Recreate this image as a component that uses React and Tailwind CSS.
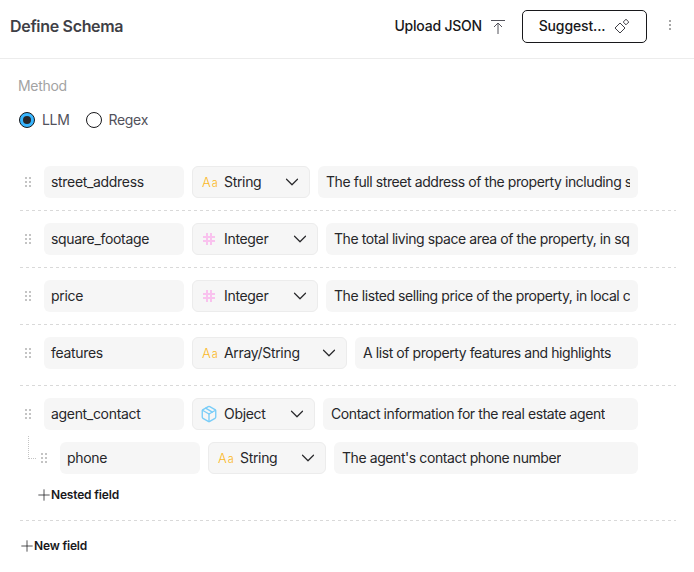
import React from "react";
import { ChevronDown, Plus, Package } from "lucide-react";

const Grip = () => (
  <svg width="6" height="10" viewBox="0 0 6 10" className="shrink-0 text-[#c4c4c4]" fill="currentColor">
    <rect x="0" y="0" width="2" height="2" /><rect x="4" y="0" width="2" height="2" />
    <rect x="0" y="4" width="2" height="2" /><rect x="4" y="4" width="2" height="2" />
    <rect x="0" y="8" width="2" height="2" /><rect x="4" y="8" width="2" height="2" />
  </svg>
);

const Divider = () => (
  <div className="h-px ml-[2px] bg-[repeating-linear-gradient(90deg,#d9d9d9_0_3px,transparent_3px_6px)]" />
);

const TypeIcon = ({ type }) => {
  if (type === "Integer")
    return (
      <svg width="16" height="16" viewBox="0 0 16 16" fill="none" stroke="#f9c2ee" strokeWidth="2" className="shrink-0">
        <path d="M6 2V14M10 2V14M2 6H14M2 10H14" />
      </svg>
    );
  if (type === "Object") return <Package size={18} strokeWidth={1.8} className="-m-px shrink-0 text-[#79cdf8]" />;
  return (
    <span className="w-4 shrink-0 pl-px flex items-baseline text-[#fbb81f] font-light leading-none tracking-normal">
      <span className="text-[13px]">A</span><span className="text-[11px] ml-px">a</span>
    </span>
  );
};

const widths = {
  String: "w-[118px]",
  Integer: "w-[126px]",
  "Array/String": "w-[155px]",
  Object: "w-[123px]",
};

const Row = ({ name, type, desc, nameW = "w-[140px]" }) => (
  <div className="flex items-center gap-2 flex-1 min-w-0">
    <div className={`${nameW} h-8 shrink-0 rounded-md bg-[#f6f6f6] px-[7px] pb-[2px] flex items-center text-[14px] text-[#27272a]`}>{name}</div>
    <div className={`${widths[type]} h-8 shrink-0 rounded-md bg-[#f6f6f6] border border-[#ececec] pl-2 pr-[6px] flex items-center text-[14px] text-[#27272a]`}>
      <TypeIcon type={type} />
      <span className="ml-[7px] pb-[2px]">{type}</span>
      <ChevronDown size={22} strokeWidth={1.3} className="ml-auto text-[#27272a]" />
    </div>
    <div className="h-8 flex-1 min-w-0 rounded-md bg-[#f6f6f6] px-2 pb-[2px] flex items-center text-[14px] tracking-[-0.03em] text-[#27272a]">
      <span className="block overflow-hidden whitespace-nowrap">{desc}</span>
    </div>
  </div>
);

const fields = [
  ["street_address", "String", "The full street address of the property including street"],
  ["square_footage", "Integer", "The total living space area of the property, in square feet"],
  ["price", "Integer", "The listed selling price of the property, in local currency"],
  ["features", "Array/String", "A list of property features and highlights"],
];

export default function App() {
  return (
    <div className="w-[694px] h-[572px] bg-white overflow-hidden font-['Inter',sans-serif] tracking-[-0.02em]">
      <header className="h-[59px] border-b border-[#ececec] pl-[10px] pr-[23px] pb-[5px] flex items-center">
        <h1 className="pb-[2px] text-[16px] font-semibold tracking-[-0.02em] text-[#3f3f46]">Define Schema</h1>
        <div className="ml-auto flex items-center">
          <button className="flex items-center text-[14px] font-medium tracking-[-0.015em] text-[#18181b]">
            <span className="pb-[2px]">Upload JSON</span>
            <svg width="14" height="14" viewBox="0 0 14 14" fill="none" stroke="#52525b" strokeWidth="1" className="ml-[9px]">
              <path d="M0 .5H14M7 3V14M3 7L7 3L11 7" />
            </svg>
          </button>
          <button className="ml-[17px] w-[125px] h-[33px] rounded-[5px] border border-[#18181b] flex items-center justify-center gap-[9px] text-[14px] font-medium tracking-[-0.01em] text-[#18181b]">
            <span className="pb-[2px]">Suggest...</span>
            <svg width="16" height="16" viewBox="0 0 16 16" fill="none" stroke="#3f3f46" strokeWidth="1">
              <path d="M6 4 L11 9 L6 14 L1 9 Z" />
              <path d="M12 .3 L14.8 3 L12 5.8 L9.2 3 Z" />
            </svg>
          </button>
          <svg width="2" height="10" viewBox="0 0 2 10" className="ml-[22px] mb-[3px] text-[#8a8a8a]" fill="currentColor">
            <rect x="0" y="0" width="2" height="2" rx="1" /><rect x="0" y="4" width="2" height="2" rx="1" /><rect x="0" y="8" width="2" height="2" rx="1" />
          </svg>
        </div>
      </header>

      <main className="px-[18px]">
        <div className="pt-[18px] text-[14px] leading-[18px] text-[#a3a3a3]">Method</div>
        <div className="mt-[15px] flex items-center text-[14px] leading-5 text-[#52525b]">
          <span className="w-4 h-4 ml-[1px] rounded-full border border-[#18181b] bg-[#38b6ff] flex items-center justify-center">
            <span className="w-2 h-2 rounded-full bg-[#27272a]" />
          </span>
          <span className="ml-[7px]">LLM</span>
          <span className="ml-4 w-4 h-4 rounded-full border border-[#18181b]" />
          <span className="ml-[7px]">Regex</span>
        </div>

        <div className="mt-[24px]">
          {fields.map(([n, t, d], i) => (
            <div key={n}>
              <div className={`flex items-center pr-[38px] pt-[12px] ${i === 3 ? "pb-[16px]" : "pb-[12px]"}`}>
                <span className="w-[26px] pl-[7px] shrink-0"><Grip /></span>
                <Row name={n} type={t} desc={d} />
              </div>
              <Divider />
            </div>
          ))}

          <div className="pt-[12px] pb-[17px] pr-[38px]">
            <div className="flex items-center">
              <span className="w-[26px] pl-[7px] shrink-0"><Grip /></span>
              <Row name="agent_contact" type="Object" desc="Contact information for the real estate agent" />
            </div>
            <div className="relative mt-3 flex items-center pl-[22px]">
              <span className="absolute left-[10px] top-[-6px] w-[8px] h-[23px] border-l border-b border-dotted border-[#c4c4c4]" />
              <span className="w-[20px] pl-px shrink-0"><Grip /></span>
              <Row name="phone" type="String" desc="The agent's contact phone number" />
            </div>
            <button className="mt-[13px] ml-[17px] flex items-center text-[12px] leading-4 font-semibold tracking-[-0.015em] text-[#18181b]">
              <Plus size={18} strokeWidth={1} className="-my-px -mr-[2px]" />Nested field
            </button>
          </div>
          <Divider />

          <button className="mt-[17px] flex items-center text-[12px] leading-4 font-semibold tracking-[-0.015em] text-[#18181b]">
            <Plus size={18} strokeWidth={1} className="-my-px -mr-[2px]" />New field
          </button>
        </div>
      </main>
    </div>
  );
}
